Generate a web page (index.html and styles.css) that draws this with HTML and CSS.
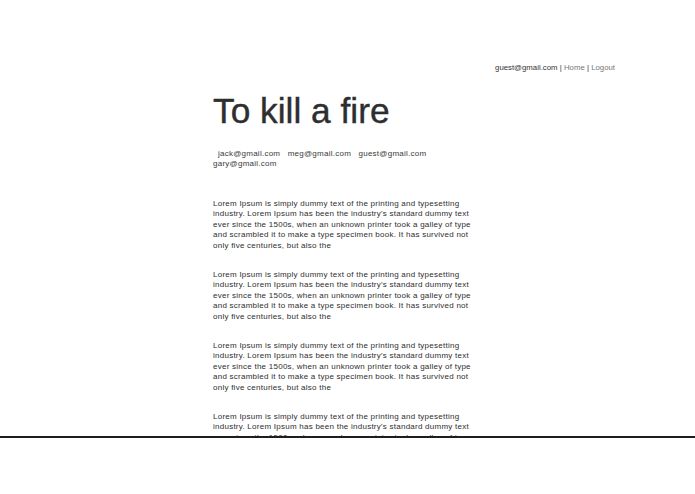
FILE: index.html
```html
<!DOCTYPE html>
<html>
<head>
<meta charset="utf-8">
<link rel="stylesheet" href="styles.css">
</head>
<body>
<div class="frame">
  <div class="page">
    <div class="topnav"><span class="me">guest@gmail.com</span> <span class="sep">|</span> <a class="link" href="#">Home</a> <span class="sep">|</span> <a class="link" href="#">Logout</a></div>
    <div class="content">
      <h1 class="title">To kill a fire</h1>
      <div class="members">&nbsp; <span class="member">jack@gmail.com</span> &nbsp; <span class="member">meg@gmail.com</span> &nbsp; <span class="member">guest@gmail.com</span> &nbsp; <span class="member">gary@gmail.com</span></div>
      <p class="para">Lorem Ipsum is simply dummy text of the printing and typesetting industry. Lorem Ipsum has been the industry's standard dummy text ever since the 1500s, when an unknown printer took a galley of type and scrambled it to make a type specimen book. It has survived not only five centuries, but also the</p>
      <p class="para">Lorem Ipsum is simply dummy text of the printing and typesetting industry. Lorem Ipsum has been the industry's standard dummy text ever since the 1500s, when an unknown printer took a galley of type and scrambled it to make a type specimen book. It has survived not only five centuries, but also the</p>
      <p class="para">Lorem Ipsum is simply dummy text of the printing and typesetting industry. Lorem Ipsum has been the industry's standard dummy text ever since the 1500s, when an unknown printer took a galley of type and scrambled it to make a type specimen book. It has survived not only five centuries, but also the</p>
      <p class="para">Lorem Ipsum is simply dummy text of the printing and typesetting industry. Lorem Ipsum has been the industry's standard dummy text ever since the 1500s, when an unknown printer took a galley of type and scrambled it to make a type specimen book. It has survived not only five centuries, but also the</p>
    </div>
  </div>
</div>
</body>
</html>
```

FILE: styles.css
```css
html, body {
  margin: 0;
  padding: 0;
  background: #fff;
}
body {
  font-family: "Liberation Sans", Arial, sans-serif;
  color: #333;
}
.frame {
  height: 436px;
  border-bottom: 2px solid #1e1e1e;
  overflow: hidden;
}
.page {
  margin-left: 213px;
  width: 402px;
  padding-top: 63px;
}
.topnav {
  text-align: right;
  font-size: 7.8px;
  line-height: 10px;
  color: #333;
}
.topnav .link {
  color: #777;
  text-decoration: none;
}
.content {
  width: 262px;
}
.title {
  margin: 20px 0 0;
  font-size: 35.3px;
  line-height: 35px;
  font-weight: normal;
  color: #2e2e2e;
  -webkit-text-stroke: 0.4px #2e2e2e;
}
.members {
  margin-top: 21px;
  font-size: 8px;
  line-height: 10px;
  letter-spacing: 0.25px;
  color: #3a3a3a;
}
.para {
  margin: 0;
  font-size: 8px;
  line-height: 10.5px;
  letter-spacing: 0.25px;
  color: #2e2e2e;
}
.members + .para {
  margin-top: 29.5px;
}
.para + .para {
  margin-top: 18.5px;
}
```
